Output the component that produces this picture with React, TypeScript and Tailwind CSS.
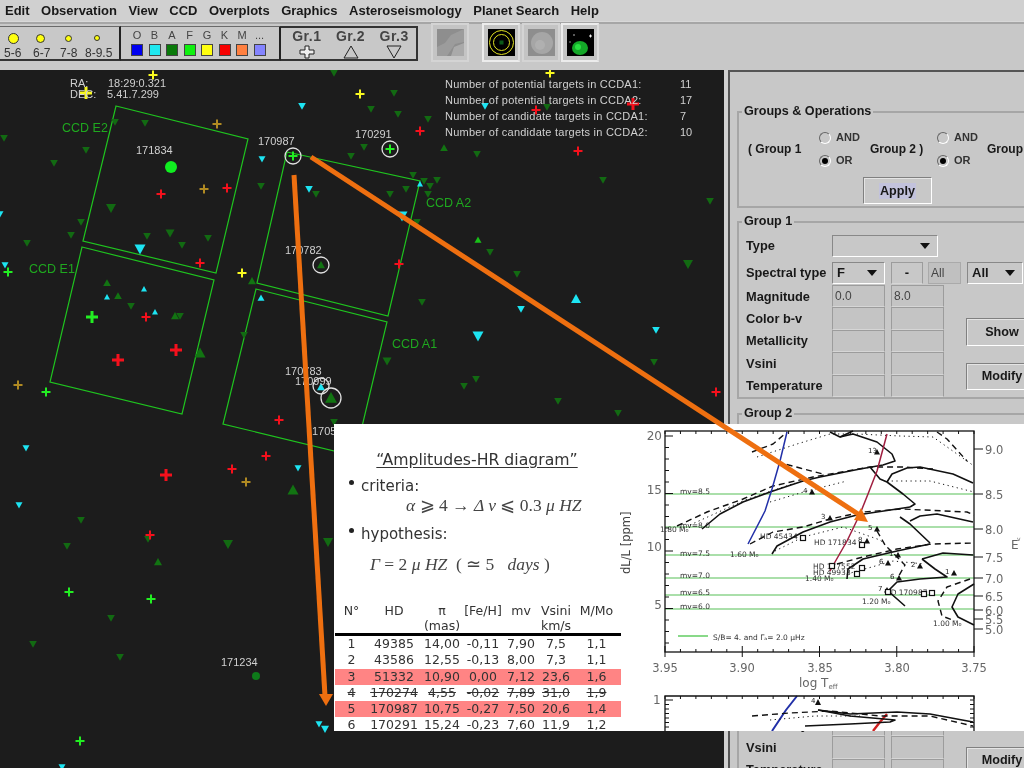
import React from "react";

const sans = "[font-family:'Liberation_Sans',sans-serif]";

type Star = [number, number, number?];

const MENU = ["Edit", "Observation", "View", "CCD", "Overplots", "Graphics", "Asteroseismology", "Planet Search", "Help"];

const COLORS = [
  { l: "O", c: "bg-[#0000f0]" },
  { l: "B", c: "bg-[#20e8f0]" },
  { l: "A", c: "bg-[#0a7a0a]" },
  { l: "F", c: "bg-[#10f010]" },
  { l: "G", c: "bg-[#ffff10]" },
  { l: "K", c: "bg-[#f80000]" },
  { l: "M", c: "bg-[#ff8040]" },
  { l: "...", c: "bg-[#8484ff]" },
];

// sky chart, page coordinates
const DARK_DOWN: Star[] = [
  [334, 73], [115, 122], [145, 123], [4, 138], [86, 150], [54, 163], [111, 208, 5], [81, 222], [71, 235], [27, 243],
  [147, 236], [170, 233, 4.5], [182, 245], [208, 238], [261, 186], [316, 194], [131, 306], [180, 316], [244, 335],
  [394, 93], [371, 109], [398, 114], [428, 119], [547, 107], [364, 147], [351, 156], [477, 154], [603, 180], [710, 201],
  [413, 175], [424, 181], [437, 180], [430, 186], [406, 189], [390, 194], [428, 194], [417, 222], [490, 252], [688, 264, 5],
  [517, 274], [422, 302], [387, 361, 4.5], [654, 362], [476, 379], [464, 386], [558, 401], [618, 413], [334, 422],
  [81, 520], [67, 546], [148, 539], [228, 544, 5], [328, 542, 5], [111, 618], [33, 644], [120, 657],
];
const DARK_UP: Star[] = [[252, 281, 4], [107, 283], [118, 296], [175, 316, 4], [200, 353, 5.5], [444, 148], [293, 490, 5.5], [158, 562, 4], [321, 265, 4], [331, 398, 6]];
const CYAN_DOWN: Star[] = [
  [302, 106], [262, 159, 3.5], [309, 189], [140, 249, 5.5], [5, 265, 3.5], [0, 214, 3.5], [485, 106], [402, 216, 5.5], [521, 309],
  [478, 336, 5.5], [656, 330], [26, 448, 3.5], [19, 505, 3.5], [298, 468, 3.5], [319, 724, 3.5], [325, 729, 4], [62, 767, 3.5],
];
const CYAN_UP: Star[] = [[144, 289, 3], [107, 297, 3], [155, 312, 3], [261, 298, 3.5], [420, 184, 3], [576, 299, 5], [321, 387, 4]];
const RED: Star[] = [
  [161, 194], [227, 188], [200, 263], [146, 317], [176, 350, 6], [118, 360, 6], [279, 420], [420, 131], [536, 110],
  [633, 104, 6], [578, 151], [399, 264], [716, 392], [166, 475, 6], [232, 469], [266, 456], [150, 535],
];
const BROWN: Star[] = [[217, 124], [204, 189], [18, 385], [246, 482]];
const YELLOW: Star[] = [[153, 75], [86, 93, 6], [242, 273], [360, 94], [550, 73]];
const LIME: Star[] = [[8, 272], [92, 317, 6], [46, 392], [293, 156], [390, 149], [69, 592], [151, 599], [80, 741]];

const CCDS = [
  { p: "116,106 248,139 216,273 83,241", t: "CCD E2", x: 62, y: 132 },
  { p: "82,247 214,280 182,414 50,382", t: "CCD E1", x: 29, y: 273 },
  { p: "287,152 420,181 388,316 257,283", t: "CCD A2", x: 426, y: 207 },
  { p: "256,289 387,322 355,456 223,424", t: "CCD A1", x: 392, y: 348 },
];

const STAR_LABELS: [string, number, number][] = [
  ["171834", 136, 154], ["170987", 258, 145], ["170291", 355, 138], ["170782", 285, 254],
  ["170783", 285, 375], ["170999", 295, 385], ["1705", 312, 435], ["171234", 221, 666],
];

const COUNTS: [string, string, number][] = [
  ["Number of potential targets in CCDA1:", "11", 88],
  ["Number of potential targets in CCDA2:", "17", 104],
  ["Number of candidate targets in CCDA1:", "7", 120],
  ["Number of candidate targets in CCDA2:", "10", 136],
];

function Plus({ s, color }: { s: Star; color: string }) {
  const r = s[2] ?? 4.5;
  return (
    <path
      d={`M${s[0] - r} ${s[1]}H${s[0] + r}M${s[0]} ${s[1] - r}V${s[1] + r}`}
      stroke={color}
      strokeWidth={r > 5 ? 3 : 2}
    />
  );
}

function Tri({ s, up, color }: { s: Star; up?: boolean; color: string }) {
  const r = s[2] ?? 3.8;
  const d = up ? -1 : 1;
  return <polygon points={`${s[0] - r},${s[1] - d * r * 0.8} ${s[0] + r},${s[1] - d * r * 0.8} ${s[0]},${s[1] + d * r}`} fill={color} />;
}

function SkyChart() {
  return (
    <svg viewBox="0 70 724 698" className="block w-[724px] h-[698px]">
      {CCDS.map((c) => (
        <g key={c.t}>
          <polygon points={c.p} fill="none" stroke="#1fc41f" strokeWidth="1.2" />
          <text x={c.x} y={c.y} fontSize="12.5" fill="#1fa81f">{c.t}</text>
        </g>
      ))}
      {DARK_DOWN.map((s, i) => <Tri key={i} s={s} color="#126a12" />)}
      {DARK_UP.map((s, i) => <Tri key={i} s={s} up color="#127412" />)}
      <Tri s={[478, 240, 3.5]} up color="#18c018" />
      {CYAN_DOWN.map((s, i) => <Tri key={i} s={s} color="#1de4f2" />)}
      {CYAN_UP.map((s, i) => <Tri key={i} s={s} up color="#1de4f2" />)}
      {RED.map((s, i) => <Plus key={i} s={s} color="#f5101c" />)}
      {BROWN.map((s, i) => <Plus key={i} s={s} color="#b08a22" />)}
      {YELLOW.map((s, i) => <Plus key={i} s={s} color="#f8f820" />)}
      {LIME.map((s, i) => <Plus key={i} s={s} color="#22ee22" />)}
      <circle cx="171" cy="167" r="6" fill="#10ee20" />
      <circle cx="256" cy="676" r="4" fill="#0e7a1a" />
      <g fill="none" stroke="#e0e0e0" strokeWidth="1.3">
        <circle cx="293" cy="156" r="8" />
        <circle cx="390" cy="149" r="8" />
        <circle cx="321" cy="265" r="8" />
        <circle cx="321" cy="386" r="8" />
        <circle cx="331" cy="398" r="10" />
      </g>
      <g fontSize="11" fill="#d0d0d0">
        {STAR_LABELS.map(([t, x, y]) => <text key={t} x={x} y={y}>{t}</text>)}
        <text x="70" y="87">RA:</text>
        <text x="108" y="87">18:29:0.321</text>
        <text x="70" y="98">DEC:</text>
        <text x="107" y="98">5.41.7.299</text>
        {COUNTS.map(([t, n, y]) => (
          <g key={t}>
            <text x="445" y={y} letterSpacing="0.24">{t}</text>
            <text x="680" y={y}>{n}</text>
          </g>
        ))}
      </g>
    </svg>
  );
}

function Line({ p, kind = "solid", w, color = "#111" }: { p: string; kind?: "solid" | "dash" | "dot"; w?: number; color?: string }) {
  const dash = kind === "dash" ? "6 4" : kind === "dot" ? "1.2 3.5" : undefined;
  return <polyline points={p} fill="none" stroke={color} strokeWidth={w ?? (kind === "solid" ? 1.6 : kind === "dash" ? 1.4 : 1)} strokeDasharray={dash} strokeLinejoin="round" />;
}

const MV: [string, number, number][] = [
  ["mv=8.5", 494, 493], ["mv=8.0", 527, 527], ["mv=7.5", 555, 555], ["mv=7.0", 578, 577], ["mv=6.5", 595, 594], ["mv=6.0", 609, 608],
];
const TRIANGLES: [number, number, string][] = [
  [877, 452, "13"], [830, 518, "3"], [877, 529, "5"], [867, 541, "8"], [898, 555, "1"], [888, 563, "6"], [920, 566, "2"], [954, 573, "1"], [899, 578, "6"], [887, 590, "7"], [812, 492, "4"],
];
const SQUARES: [number, number][] = [[803, 538], [862, 545], [832, 566], [862, 568], [857, 574], [924, 594], [932, 593], [888, 592]];
const MASSES: [string, number, number][] = [["1.80 M₀", 660, 532], ["1.60 M₀", 730, 557], ["1.40 M₀", 805, 581], ["1.20 M₀", 862, 604], ["1.00 M₀", 933, 626]];
const HDS: [string, number, number][] = [["HD 45434", 760, 539], ["HD 171834", 814, 545], ["HD 177552", 813, 569], ["HD 49933", 813, 575], ["HD 170987", 885, 595]];
const RIGHT: [string, number][] = [["9.0", 449], ["8.5", 494], ["8.0", 529], ["7.5", 557], ["7.0", 578], ["6.5", 596], ["6.0", 610], ["5.5", 619], ["5.0", 629]];

function HrPlot() {
  return (
    <svg viewBox="615 424 409 307" className="block w-[409px] h-[307px] shrink-0">
      {/* green S/B lines */}
      <g stroke="#8ed48e" strokeWidth="1.5">
        {MV.map(([t, y]) => <line key={t} x1="665" x2="974" y1={y} y2={y} />)}
        <line x1="678" x2="708" y1="636" y2="636" stroke="#62cc62" />
      </g>
      <g fontSize="7.5" fill="#333">
        {MV.map(([t, , y]) => <text key={t} x="680" y={y + 1}>{t}</text>)}
        {MASSES.map(([t, x, y]) => <text key={t} x={x} y={y}>{t}</text>)}
        {HDS.map(([t, x, y]) => <text key={t} x={x} y={y}>{t}</text>)}
        <text x="713" y="640">S/B= 4. and Γₐ= 2.0 μHz</text>
      </g>

      {/* tracks */}
      <Line p="702,529 720,514 743,502 770,492 803,481 820,477 860,469 883,465 895,461 892,454 877,442 853,434 840,437 830,432" />
      <Line p="853,431 840,437" />
      <Line p="870,467 880,479 887,482 903,494 915,504 910,507" />
      <Line p="887,482 892,474 907,468 920,467 953,474 973,483" />
      <Line p="772,554 777,546 803,532 830,522 857,515 897,509 910,507" />
      <Line p="900,517 910,524 930,543" />
      <Line p="910,521 920,516 937,514 973,522" />
      <Line p="847,579 848,569 863,559 897,551 930,544" />
      <Line p="922,559 935,569 947,577 920,579 897,582 888,591 905,606" />
      <Line p="922,559 943,553 973,555" />
      <Line p="974,584 958,594 952,607 958,617 974,625" />
      <Line kind="dash" p="677,526 707,512 743,499 773,486 813,477 870,467 883,467 903,467 933,469" />
      <Line kind="dash" p="752,452 773,444 787,432" />
      <Line kind="dash" p="777,462 800,468 823,474" />
      <Line kind="dash" p="937,432 947,439 967,461" />
      <Line kind="dash" p="750,544 773,532 803,527 830,519 863,512 902,509 967,512 974,515" />
      <Line kind="dash" p="837,564 863,557 897,549 932,544 974,543" />
      <Line kind="dash" p="970,579 947,587 938,601 942,616 955,621" />
      <Line kind="dash" p="877,531 885,545 905,565 897,579" />
      <Line kind="dot" p="757,457 797,444 830,434 857,434 900,436 933,437 974,466" />
      <Line kind="dot" p="770,502 807,491 847,481" />
      <Line kind="dot" p="887,481 930,481 974,492" />
      <Line kind="dot" p="775,551 803,537 843,527 880,540 900,560" />
      <Line kind="dot" p="847,574 893,561 925,564" />
      <Line kind="dot" p="690,525 745,500 795,483" />

      <Line w={1.5} color="#2230a8" p="787,432 780,461 772,489 765,511 748,544" />
      <Line w={1.5} color="#a01f40" p="887,434 877,471 868,494 860,514 847,541 835,562 830,571" />

      {TRIANGLES.map(([x, y, t]) => (
        <g key={`${x}${y}`}>
          <polygon points={`${x - 3},${y + 2.5} ${x + 3},${y + 2.5} ${x},${y - 3}`} fill="#111" />
          <text x={x - 9} y={y + 1} fontSize="7" fill="#222">{t}</text>
        </g>
      ))}
      {SQUARES.map(([x, y], i) => <rect key={i} x={x - 2.5} y={y - 2.5} width="5" height="5" fill="white" stroke="#111" strokeWidth="1.2" />)}

      {/* frame */}
      <rect x="665" y="431" width="309" height="221" fill="none" stroke="#111" strokeWidth="1.3" />
      <g stroke="#111" strokeWidth="1">
        {Array.from({ length: 19 }, (_, i) => <line key={i} x1="665" x2={i % 5 === 0 ? 673 : 669} y1={436 + i * 11.5} y2={436 + i * 11.5} />)}
        {Array.from({ length: 21 }, (_, i) => <line key={i} x1={665 + i * 15.45} x2={665 + i * 15.45} y1="431" y2="434" />)}
        {Array.from({ length: 21 }, (_, i) => <line key={i} x1={665 + i * 15.45} x2={665 + i * 15.45} y1={i % 5 === 0 ? 646 : 649} y2={i % 5 === 0 ? 657 : 652} />)}
        {RIGHT.map(([t, y]) => <line key={t} x1="974" x2="983" y1={y} y2={y} />)}
      </g>
      <g fill="#666">
        {[["20", 440], ["15", 494], ["10", 551], ["5", 609]].map(([t, y]) => <text key={t} x="662" y={y} textAnchor="end" fontSize="12">{t}</text>)}
        {RIGHT.map(([t, y]) => <text key={t} x="985" y={Number(y) + 4.5} fontSize="11.5">{t}</text>)}
        {[["3.95", 665], ["3.90", 742], ["3.85", 820], ["3.80", 897], ["3.75", 974]].map(([t, x]) => <text key={t} x={x} y="672" textAnchor="middle" fontSize="11.5">{t}</text>)}
        <text x="799" y="687" fontSize="12">log T<tspan fontSize="7" dy="2">eff</tspan></text>
        <text transform="translate(630 574) rotate(-90)" fontSize="11.5" fill="#444">dL/L [ppm]</text>
        <text x="1011" y="549" fontSize="12">E</text>
        <text x="1017" y="541" fontSize="6">v</text>
      </g>

      {/* lower plot, cut off by the slide */}
      <Line color="#2230a8" w={2} p="797,696 786,710 772,731" />
      <Line color="#d02020" w={2.4} p="887,714 880,722 873,731" />
      <Line p="818,710 850,714 897,712 930,714 973,722" />
      <Line kind="dash" p="752,716 790,713 830,711 880,716 930,716 973,726" />
      <Line p="805,726 850,724 890,722 895,720 850,716 818,710" />
      <Line kind="dot" p="770,720 815,716 860,716" />
      <polygon points="815,705 821,705 818,699" fill="#111" />
      <text x="811" y="703" fontSize="7" fill="#222">4</text>
      <path d="M665 731V696H974V731" fill="none" stroke="#111" strokeWidth="1.3" />
      <g stroke="#111" strokeWidth="1">
        {Array.from({ length: 8 }, (_, i) => <line key={i} x1="665" x2={i === 0 ? 673 : 669} y1={700 + i * 4.5} y2={700 + i * 4.5} />)}
        {Array.from({ length: 8 }, (_, i) => <line key={i} x1="974" x2="970" y1={700 + i * 4.5} y2={700 + i * 4.5} />)}
        {Array.from({ length: 21 }, (_, i) => <line key={i} x1={665 + i * 15.45} x2={665 + i * 15.45} y1="696" y2="699" />)}
      </g>
      <text x="653" y="704" fontSize="12" fill="#666">1</text>
    </svg>
  );
}

const TABLE = [
  ["1", "49385", "14,00", "-0,11", "7,90", "7,5", "1,1"],
  ["2", "43586", "12,55", "-0,13", "8,00", "7,3", "1,1"],
  ["3", "51332", "10,90", "0,00", "7,12", "23,6", "1,6"],
  ["4", "170274", "4,55", "-0,02", "7,89", "31,0", "1,9"],
  ["5", "170987", "10,75", "-0,27", "7,50", "20,6", "1,4"],
  ["6", "170291", "15,24", "-0,23", "7,60", "11,9", "1,2"],
];

function Slide() {
  return (
    <div className="absolute left-[334px] top-[424px] w-[690px] h-[307px] bg-white overflow-hidden flex [font-family:'DejaVu_Sans',sans-serif]">
      <div className="w-[281px] shrink-0 text-[#333]">
        <div className="pt-[26px] pl-[5px] text-center text-[15.7px] leading-5 underline underline-offset-2 whitespace-nowrap">“Amplitudes-HR diagram”</div>
        <div className="mt-[6px] pl-[15px] flex items-center gap-[7px] text-[15px] leading-5">
          <span className="w-[5px] h-[5px] rounded-full bg-[#222] -mt-2" />
          <span>criteria:</span>
        </div>
        <div className="-mt-[4px] pl-[72px] h-[26px] text-[17.5px] leading-[26px] [font-family:'Liberation_Serif',serif] text-[#444] whitespace-nowrap">
          <i>α</i> ⩾ 4 → <i>Δ ν</i> ⩽ 0.3 <i>μ HZ</i>
        </div>
        <div className="mt-[6px] pl-[15px] flex items-center gap-[7px] text-[15px] leading-5">
          <span className="w-[5px] h-[5px] rounded-full bg-[#222] -mt-2" />
          <span>hypothesis:</span>
        </div>
        <div className="mt-[7px] pl-[36px] h-[26px] text-[17.5px] leading-[26px] [font-family:'Liberation_Serif',serif] text-[#444] whitespace-nowrap">
          <i>Γ</i> = 2 <i>μ HZ</i> &nbsp;( ≃ 5 &nbsp; <i>days</i> )
        </div>
        <table className="mt-[27px] ml-[1px] w-[286px] table-fixed text-center text-[12.5px] leading-[16.3px] text-[#333]">
          <colgroup>
            <col className="w-[33px]" />
            <col className="w-[52px]" />
            <col className="w-[44px]" />
            <col className="w-[38px]" />
            <col className="w-[38px]" />
            <col className="w-[32px]" />
            <col className="w-[49px]" />
          </colgroup>
          <thead>
            <tr className="border-b-[3px] border-black align-top leading-[14.5px]">
              <th className="font-normal">N°</th>
              <th className="font-normal">HD</th>
              <th className="font-normal whitespace-nowrap">π<br />(mas)</th>
              <th className="font-normal whitespace-nowrap">[Fe/H]</th>
              <th className="font-normal">mv</th>
              <th className="font-normal whitespace-nowrap">Vsini<br />km/s</th>
              <th className="font-normal whitespace-nowrap">M/Mo</th>
            </tr>
          </thead>
          <tbody>
            {TABLE.map((row) => (
              <tr key={row[0]} className={row[0] === "3" || row[0] === "5" ? "bg-[#ff8484]" : ""}>
                {row.map((v, i) => (
                  <td key={i} className={`whitespace-nowrap ${row[0] === "4" ? "line-through" : ""}`}>{v}</td>
                ))}
              </tr>
            ))}
          </tbody>
        </table>
      </div>
      <HrPlot />
    </div>
  );
}

function GroupBox({ title, className, children }: { title: string; className: string; children: React.ReactNode }) {
  return (
    <div className={`relative w-[340px] shrink-0 border-2 border-[#a6a6a6] ${className}`}>
      <span className="absolute -top-[10px] left-[3px] px-[2px] bg-[#c8c8c8] text-[12.6px] leading-4 font-bold">{title}</span>
      {children}
    </div>
  );
}

function Radio({ on, label }: { on?: boolean; label: string }) {
  return (
    <div className="flex items-center gap-[5px] h-[23px]">
      <span className="w-[12px] h-[12px] rounded-full border border-[#666] border-b-white border-r-white bg-[#c8c8c8] flex items-center justify-center">
        {on && <span className="w-[6px] h-[6px] rounded-full bg-black" />}
      </span>
      <span className="text-[11px] text-[#333]">{label}</span>
    </div>
  );
}

function Field({ w = "w-[53px]", text }: { w?: string; text?: string }) {
  return <div className={`${w} h-full shrink-0 border border-[#9c9c9c] border-b-[#d6d6d6] bg-[#c4c4c4] px-[2px] text-[12px] leading-5 text-[#444]`}>{text}</div>;
}

function Select({ w, text }: { w: string; text?: string }) {
  return (
    <div className={`${w} h-[22px] shrink-0 border border-[#888] border-b-white border-r-white flex items-center justify-between pl-1 pr-[7px] font-bold text-[13px]`}>
      <span>{text}</span>
      <span className="w-0 h-0 border-x-[5px] border-x-transparent border-t-[6px] border-t-[#111]" />
    </div>
  );
}

function Button({ label, cls }: { label: React.ReactNode; cls: string }) {
  return (
    <div className={`${cls} border border-[#808080] border-b-white border-r-white shadow-[inset_1px_1px_0_#e4e4e4] flex items-center justify-center font-bold text-[12.6px]`}>
      {label}
    </div>
  );
}

const ROWS: [string, string?, string?][] = [
  ["Magnitude", "0.0", "8.0"],
  ["Color b-v"],
  ["Metallicity"],
  ["Vsini"],
  ["Temperature"],
];

function GroupForm({ title }: { title: string }) {
  return (
    <GroupBox title={title} className="h-[178px] mb-[14px] pl-[7px] pt-[12px]">
      <div className="flex items-center h-[22px]">
        <span className="w-[86px] font-bold text-[12.8px]">Type</span>
        <Select w="w-[106px]" />
      </div>
      <div className="flex items-center h-[22px] mt-[5px]">
        <span className="w-[86px] font-bold text-[12.8px] whitespace-nowrap">Spectral type</span>
        <Select w="w-[53px]" text="F" />
        <div className="ml-[6px] w-[32px] h-[22px] border border-[#9c9c9c] border-b-[#d6d6d6] flex items-center justify-center font-bold text-[13px]">-</div>
        <div className="ml-[5px] w-[33px] h-[22px] border border-[#aaa] bg-[#c0c0c0] text-[12px] text-[#444] leading-5 px-[2px]">All</div>
        <div className="ml-[6px]"><Select w="w-[56px]" text="All" /></div>
      </div>
      <div className="flex mt-[1px]">
        <div className="flex flex-col">
          {ROWS.map(([l, a, b]) => (
            <div key={l} className="flex items-center h-[22.4px]">
              <span className="w-[86px] font-bold text-[12.8px]">{l}</span>
              <Field text={a} />
              <div className="w-[6px]" />
              <Field text={b} />
            </div>
          ))}
        </div>
        <div className="ml-[22px] pt-[33px] flex flex-col gap-[17px]">
          <Button label="Show" cls="w-[72px] h-[28px]" />
          <Button label="Modify" cls="w-[72px] h-[27px]" />
        </div>
      </div>
    </GroupBox>
  );
}

function RightPanel() {
  return (
    <aside className="w-[300px] shrink-0 overflow-hidden bg-[#d0d0d0] pl-1 text-[#181818]">
      <div className="h-full border-l-2 border-t-2 border-[#555] bg-[#c8c8c8] pl-[7px] pt-[39px] flex flex-col">
        <GroupBox title="Groups & Operations" className="h-[97px] mb-[13px] shrink-0 pt-[13px]">
          <div className="flex items-center font-bold text-[12px]">
            <span className="w-[80px] pl-[9px] whitespace-nowrap">( Group 1</span>
            <div className="w-[47px]"><Radio label="AND" /><Radio on label="OR" /></div>
            <span className="w-[71px] pl-[4px] whitespace-nowrap">Group 2 )</span>
            <div className="w-[44px]"><Radio label="AND" /><Radio on label="OR" /></div>
            <span className="pl-[6px]">Group</span>
          </div>
          <div className="ml-[124px] mt-[5px]">
            <Button cls="w-[69px] h-[27px]" label={<span className="bg-[#c2c2dc] px-[1px] leading-4">Apply</span>} />
          </div>
        </GroupBox>
        <GroupForm title="Group 1" />
        <GroupForm title="Group 2" />
        <GroupForm title="Group 3" />
      </div>
    </aside>
  );
}

function ToolButton({ raised, children }: { raised?: boolean; children: React.ReactNode }) {
  return (
    <div className={`w-[38px] h-[39px] -mt-[1px] flex items-center justify-center border-2 ${raised ? "border-[#ececec] border-r-[#dcdcdc]" : "border-[#d4d4d4]"} bg-[#c4c4c4]`}>
      {children}
    </div>
  );
}

function Toolbar() {
  return (
    <div className="h-[48px] shrink-0 bg-[#c8c8c8] border-t-2 border-[#a6a6a6] flex items-start relative">
      <div className="w-[121px] h-[35px] mt-[2px] border-t border-b-2 border-r-2 border-[#6a6a6a] border-r-[#222] border-b-[#333] text-[12px] leading-[14px] text-[#333]">
        <div className="flex h-[22px] items-center">
          <span className="w-[25px] flex justify-center pl-[2px]"><span className="w-[11px] h-[11px] rounded-full bg-[#ffff10] border border-[#333]" /></span>
          <span className="ml-[2px] w-[27px] flex justify-center"><span className="w-[9px] h-[9px] rounded-full bg-[#ffff10] border border-[#333]" /></span>
          <span className="w-[28px] flex justify-center"><span className="w-[7px] h-[7px] rounded-full bg-[#ffff10] border border-[#333]" /></span>
          <span className="w-[30px] flex justify-center"><span className="w-[6px] h-[6px] rounded-full bg-[#ffff10] border border-[#333]" /></span>
        </div>
        <div className="flex pl-[4px] -mt-[3px] whitespace-nowrap">
          <span className="w-[29px]">5-6</span>
          <span className="w-[27px]">6-7</span>
          <span className="w-[25px]">7-8</span>
          <span>8-9.5</span>
        </div>
      </div>
      <div className="w-[160px] h-[35px] mt-[2px] border-t border-b-2 border-r-2 border-[#6a6a6a] border-r-[#222] border-b-[#333] pl-[10px] flex gap-[5.5px]">
        {COLORS.map((c) => (
          <div key={c.l} className="w-[12px] flex flex-col items-center">
            <span className="text-[11px] leading-[17px] text-[#444]">{c.l}</span>
            <span className={`w-[12px] h-[12px] border border-[#444] ${c.c}`} />
          </div>
        ))}
      </div>
      <div className="w-[137px] h-[35px] mt-[2px] border-t-2 border-b-2 border-r-2 border-[#333] flex pl-[4px]">
        <div className="w-[44px] flex flex-col items-center">
          <span className="text-[14px] leading-[17px] font-bold text-[#444] tracking-[0.5px]">Gr.1</span>
          <svg width="16" height="14" viewBox="0 0 16 14"><path d="M6 1h4v4h5v4h-5v4H6V9H1V5h5z" fill="#eee" stroke="#222" /></svg>
        </div>
        <div className="w-[44px] flex flex-col items-center">
          <span className="text-[14px] leading-[17px] font-bold text-[#444] tracking-[0.5px]">Gr.2</span>
          <svg width="16" height="14" viewBox="0 0 16 14"><path d="M8 1l7 12H1z" fill="none" stroke="#222" /></svg>
        </div>
        <div className="w-[44px] flex flex-col items-center">
          <span className="text-[14px] leading-[17px] font-bold text-[#444] tracking-[0.5px]">Gr.3</span>
          <svg width="16" height="14" viewBox="0 0 16 14"><path d="M1 1h14L8 13z" fill="none" stroke="#222" /></svg>
        </div>
      </div>
      <div className="ml-[13px]">
        <ToolButton>
          <svg width="27" height="27" viewBox="0 0 27 27"><rect width="27" height="27" fill="#8e8e8e" /><path d="M0 27V18L8 14 14 6 27 0V13L18 15 10 27z" fill="#9c9c9c" /><path d="M14 27l3-9 10-4v13z" fill="#aaa" /></svg>
        </ToolButton>
      </div>
      <div className="ml-[13px]">
        <ToolButton raised>
          <svg width="27" height="27" viewBox="0 0 27 27"><rect width="27" height="27" fill="#000" /><circle cx="13.5" cy="13.5" r="12" fill="none" stroke="#e0e020" strokeWidth="1" /><circle cx="13.5" cy="13.5" r="8" fill="none" stroke="#e0e020" strokeWidth="1" /><rect x="11.5" y="11.5" width="4" height="4" fill="#0a5a1a" /></svg>
        </ToolButton>
      </div>
      <div className="ml-[2px]">
        <ToolButton>
          <svg width="27" height="27" viewBox="0 0 27 27"><rect width="27" height="27" fill="#8e8e8e" /><circle cx="14" cy="14" r="11" fill="#a6a6a6" /><circle cx="12" cy="16" r="5" fill="#b0b0b0" /></svg>
        </ToolButton>
      </div>
      <div className="ml-[1px]">
        <ToolButton raised>
          <svg width="27" height="27" viewBox="0 0 27 27"><rect width="27" height="27" fill="#000" /><ellipse cx="13" cy="19" rx="8" ry="7" fill="#14a828" /><circle cx="11" cy="18" r="3" fill="#28e040" /><path d="M22 7h3M23.5 5.5v3" stroke="#eee" strokeWidth="1" /><circle cx="7" cy="6" r="0.8" fill="#ccc" /><circle cx="3" cy="13" r="0.8" fill="#999" /></svg>
        </ToolButton>
      </div>
    </div>
  );
}

export default function App() {
  return (
    <div className={`relative w-[1024px] h-[768px] overflow-hidden flex flex-col bg-[#d8d8d8] blur-[0.3px] ${sans}`}>
      <nav className="h-[21px] mb-[1px] shrink-0 bg-[#d0d0d0] flex items-center gap-[11.5px] pl-[5px] text-[13px] font-bold text-[#181818] whitespace-nowrap">
        {MENU.map((m) => <span key={m}>{m}</span>)}
      </nav>
      <Toolbar />
      <div className="flex min-h-0 flex-1 pt-0">
        <main className="w-[724px] shrink-0 bg-[#1c1c1c] overflow-hidden">
          <SkyChart />
        </main>
        <RightPanel />
      </div>
      <Slide />
      {/* orange arrows drawn on top of the slide */}
      <svg viewBox="0 0 1024 768" className="absolute inset-0 w-[1024px] h-[768px] pointer-events-none">
        <line x1="294" y1="175" x2="325" y2="696" stroke="#ee6f10" strokeWidth="5" />
        <polygon points="319,694 333,694 326,706" fill="#ee6f10" />
        <line x1="311" y1="157" x2="858" y2="514" stroke="#ee6f10" strokeWidth="5" />
        <polygon points="861,508 854,520 868,522" fill="#ee6f10" />
      </svg>
    </div>
  );
}
